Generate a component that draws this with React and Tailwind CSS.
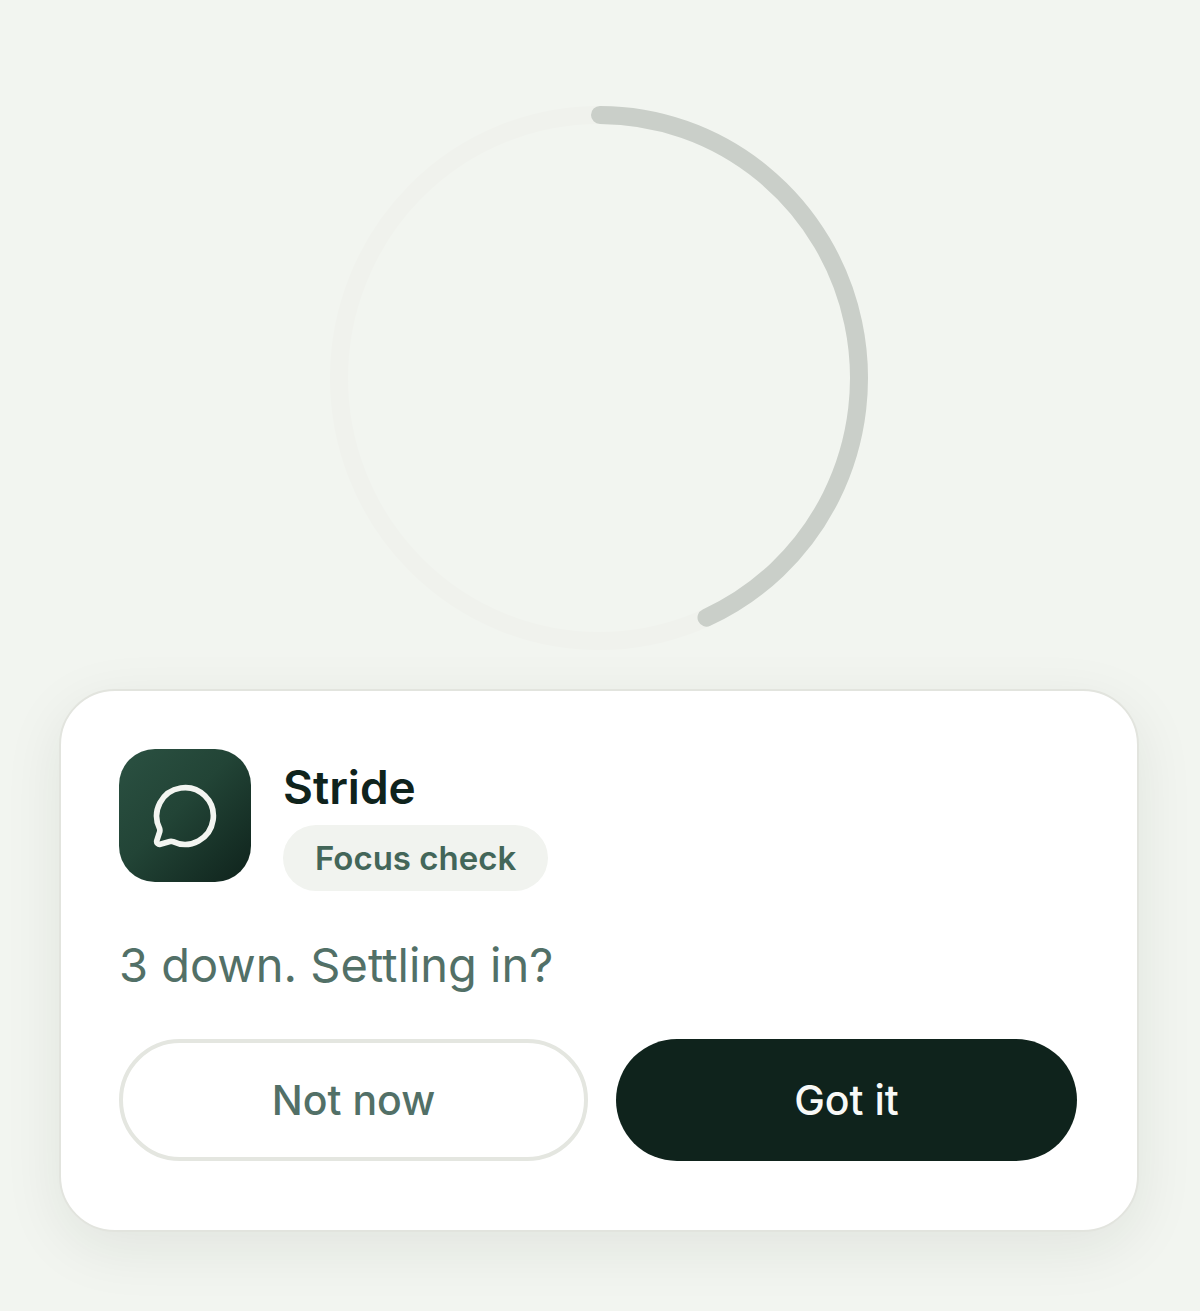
import React, { useState } from "react";
import { MessageCircle } from "lucide-react";

const ProgressRing = () => (
  <svg
    viewBox="0 0 538 544"
    className="w-[538px] max-w-full overflow-visible"
    aria-hidden="true"
  >
    <g fill="none" strokeWidth="18" strokeLinecap="round">
      <ellipse cx="269" cy="272" rx="260" ry="263" stroke="#f0f2ed" />
      <path d="M270 9A259.5 263 0 0 1 376.5 511.6" stroke="#cacfc9" />
    </g>
  </svg>
);

const FocusCard = ({ onDismiss, onConfirm }) => (
  <section className="w-full rounded-[56px] border-2 border-[#e2e4de] bg-white pt-[58px] pr-[60px] pb-[69px] pl-[58px] shadow-[0_16px_60px_rgba(30,35,28,0.08)]">
    <div className="flex items-start gap-8">
      <div className="flex h-[133px] w-[132px] shrink-0 items-center justify-center rounded-[36px] bg-linear-135 from-[#2b5142] via-[#224436] via-45% to-[#0f231c]">
        <MessageCircle className="size-[68px] text-[#f3f5f1]" strokeWidth={2} />
      </div>
      <div className="flex flex-col items-start gap-3 pt-3">
        <h1 className="text-[46px] leading-[52px] font-semibold text-[#0f231c]">
          Stride
        </h1>
        <span className="rounded-full bg-[#f1f3ef] px-8 py-3 text-[33px] leading-[42px] font-semibold text-[#436659]">
          Focus check
        </span>
      </div>
    </div>

    <p className="mt-11 text-[47px] leading-[60px] text-[#527067]">
      3 down. Settling in?
    </p>

    <div className="mt-11 flex gap-7 text-[41px] leading-[48px] font-medium">
      <button
        type="button"
        onClick={onDismiss}
        className="h-[122px] flex-1 rounded-full border-4 border-[#e4e6e0] text-[#527067]"
      >
        Not now
      </button>
      <button
        type="button"
        onClick={onConfirm}
        className="h-[122px] flex-1 rounded-full bg-[#0f231c] text-[#f8f9f7]"
      >
        Got it
      </button>
    </div>
  </section>
);

export default function App() {
  const [open, setOpen] = useState(true);

  return (
    <main className="flex min-h-screen flex-col items-center gap-[39px] bg-[#f2f5f0] pt-[106px] pr-[61px] pb-[79px] pl-[59px] font-['Inter',sans-serif]">
      <ProgressRing />
      {open && (
        <FocusCard
          onDismiss={() => setOpen(false)}
          onConfirm={() => setOpen(false)}
        />
      )}
    </main>
  );
}
